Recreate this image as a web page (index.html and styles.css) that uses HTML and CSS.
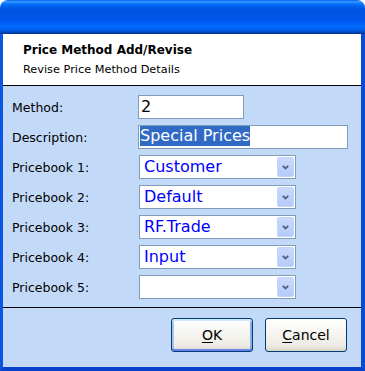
FILE: index.html
```html
<!DOCTYPE html>
<html>
<head>
<meta charset="utf-8">
<link rel="stylesheet" href="styles.css">
</head>
<body>
<div class="window">
  <div class="titlebar"></div>
  <div class="frame">
    <div class="header">
      <div class="h-title">Price Method Add/Revise</div>
      <div class="h-sub">Revise Price Method Details</div>
    </div>
    <div class="form">
      <div class="lbl">Method:</div>
      <div class="input w-method">2</div>

      <div class="lbl">Description:</div>
      <div class="input w-desc"><span class="sel">Special Prices</span></div>

      <div class="lbl">Pricebook 1:</div>
      <div class="combo"><span class="val">Customer</span><span class="dd"><svg width="7" height="5" viewBox="0 0 7 5"><path d="M0.8 0.8 L3.5 3.5 L6.2 0.8" fill="none" stroke="#4d6185" stroke-width="1.8"/></svg></span></div>

      <div class="lbl">Pricebook 2:</div>
      <div class="combo"><span class="val">Default</span><span class="dd"><svg width="7" height="5" viewBox="0 0 7 5"><path d="M0.8 0.8 L3.5 3.5 L6.2 0.8" fill="none" stroke="#4d6185" stroke-width="1.8"/></svg></span></div>

      <div class="lbl">Pricebook 3:</div>
      <div class="combo"><span class="val">RF.Trade</span><span class="dd"><svg width="7" height="5" viewBox="0 0 7 5"><path d="M0.8 0.8 L3.5 3.5 L6.2 0.8" fill="none" stroke="#4d6185" stroke-width="1.8"/></svg></span></div>

      <div class="lbl">Pricebook 4:</div>
      <div class="combo"><span class="val">Input</span><span class="dd"><svg width="7" height="5" viewBox="0 0 7 5"><path d="M0.8 0.8 L3.5 3.5 L6.2 0.8" fill="none" stroke="#4d6185" stroke-width="1.8"/></svg></span></div>

      <div class="lbl">Pricebook 5:</div>
      <div class="combo"><span class="val"></span><span class="dd"><svg width="7" height="5" viewBox="0 0 7 5"><path d="M0.8 0.8 L3.5 3.5 L6.2 0.8" fill="none" stroke="#4d6185" stroke-width="1.8"/></svg></span></div>
    </div>
    <div class="footer">
      <button class="xpbtn default"><u>O</u>K</button>
      <button class="xpbtn"><u>C</u>ancel</button>
    </div>
  </div>
</div>
</body>
</html>
```

FILE: styles.css
```css
* { box-sizing: border-box; }
html, body { margin: 0; padding: 0; height: 371px; overflow: hidden; background: #fff; }
body { font-family: "DejaVu Sans", sans-serif; color: #000; }

.window {
  width: 365px;
  height: 371px;
  display: flex;
  flex-direction: column;
}

.titlebar {
  flex: none;
  height: 34px;
  border-radius: 8px 8px 0 0;
  background: linear-gradient(to bottom,
    #0058ee 0%, #3593ff 4%, #288eff 7%, #127dff 10%, #036ffc 13%,
    #0262ee 18%, #0057e5 26%, #0054e3 32%, #0055eb 56%, #005bf5 66%,
    #026afe 76%, #0062ef 86%, #0052d6 92%, #0040ab 96%, #003092 100%);
}

.frame {
  flex: 1;
  display: flex;
  flex-direction: column;
  background: #c3d9f8;
  border-left: 3px solid #0b55e3;
  border-right: 4px solid #0a4ad8;
  border-bottom: 4px solid #0841c9;
}

.header {
  flex: none;
  height: 52px;
  background: #fff;
  border-bottom: 1px solid #000;
  padding: 9px 0 0 20px;
}
.h-title {
  font-weight: bold;
  font-size: 12px;
  line-height: 14px;
}
.h-sub {
  margin-top: 6px;
  font-size: 11.3px;
  line-height: 14px;
}

.form {
  flex: 1;
  display: grid;
  grid-template-columns: 126px auto;
  grid-auto-rows: 24px;
  row-gap: 6px;
  align-content: start;
  padding: 9px 0 0 9px;
}
.lbl {
  font-size: 12.5px;
  align-self: center;
}

.input {
  height: 24px;
  border: 1px solid #7f9db9;
  background: #fff;
  font-size: 16px;
  line-height: 22px;
  padding-left: 2px;
}
.w-method { width: 106px; }
.w-desc { width: 210px; padding-left: 1px; }
.sel {
  display: inline-block;
  vertical-align: top;
  height: 20px;
  line-height: 20px;
  background: #316ac5;
  color: #fff;
}

.combo {
  width: 157px;
  height: 24px;
  margin-left: 1px;
  border: 1px solid #7f9db9;
  background: #fff;
  display: flex;
  align-items: center;
  justify-content: space-between;
  padding: 0 1px 0 4px;
}
.val {
  font-size: 16px;
  color: #0000ff;
  line-height: 20px;
}
.dd {
  width: 17px;
  height: 20px;
  border: 1px solid #c4d5fc;
  border-radius: 2px;
  background: linear-gradient(to bottom, #cad9fc, #b5cbf7);
  display: flex;
  align-items: center;
  justify-content: center;
}
.dd svg { display: block; }

.footer {
  flex: none;
  height: 60px;
  border-top: 1px solid #000;
  display: flex;
  justify-content: flex-end;
  align-items: flex-start;
  gap: 12px;
  padding: 10px 14px 0 0;
}
.xpbtn {
  width: 82px;
  height: 34px;
  border: 1px solid #003c74;
  border-radius: 3px;
  background: linear-gradient(to bottom, #ffffff 0%, #f6f5f0 45%, #eceae2 85%, #d8d3c6 100%);
  font-family: "DejaVu Sans", sans-serif;
  font-size: 14px;
  color: #000;
  padding: 0;
}
.xpbtn u { text-decoration: underline; text-underline-offset: 2px; }
.xpbtn.default {
  box-shadow: inset 0 2px 0 #cee7ff, inset 0 -2px 0 #6982ee, inset 2px 0 0 #a6c5f3, inset -2px 0 0 #89ade4;
}
```
